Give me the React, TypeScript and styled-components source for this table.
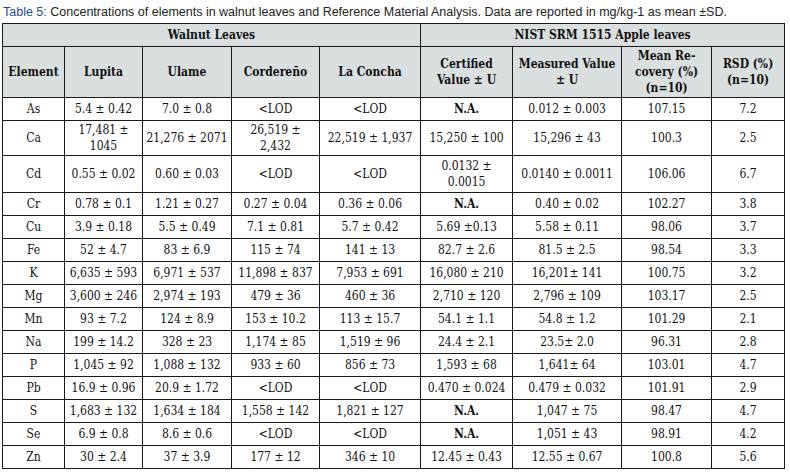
import React from 'react';
import styled, { createGlobalStyle } from 'styled-components';

const GlobalStyle = createGlobalStyle`
  body {
    margin: 0;
    background: #ffffff;
  }
`;

const Page = styled.div`
  width: 790px;
  padding: 0 0 0 2px;
  box-sizing: border-box;
`;

const Caption = styled.div`
  height: 23px;
  display: flex;
  align-items: center;
  padding-left: 1px;
  font-family: "Liberation Sans", Arial, sans-serif;
  font-size: 12.5px;
  color: #222222;
  white-space: nowrap;
`;

const Label = styled.span`
  color: #1f4a96;
`;

const Table = styled.table`
  border-collapse: collapse;
  table-layout: fixed;
  width: 783px;
  font-family: "DejaVu Serif Condensed", "DejaVu Serif", serif;
  font-size: 12px;
  color: #111111;
`;

const HeadCell = styled.th`
  background: #d9dfdf;
  border: 1px solid #1a1a1a;
  font-weight: bold;
  padding: 0 2px;
  line-height: 16px;
  text-align: center;
  vertical-align: middle;
  white-space: pre;
`;

const Cell = styled.td<{ $bold?: boolean }>`
  border: 1px solid #1a1a1a;
  padding: 0 2px;
  line-height: 16px;
  text-align: center;
  vertical-align: middle;
  white-space: pre;
  font-weight: ${(p) => (p.$bold ? 'bold' : 'normal')};
`;

const Row = styled.tr<{ $h: number }>`
  height: ${(p) => p.$h}px;
`;

const widths = [62, 78, 89, 88, 101, 92, 109, 90, 73];

const rows: { h: number; cells: string[] }[] = [
  { h: 23, cells: ['As', '5.4 ± 0.42', '7.0 ± 0.8', '<LOD', '<LOD', 'N.A.', '0.012 ± 0.003', '107.15', '7.2'] },
  { h: 35, cells: ['Ca', '17,481 ±\n1045', '21,276 ± 2071', '26,519 ±\n2,432', '22,519 ± 1,937', '15,250 ± 100', '15,296 ± 43', '100.3', '2.5'] },
  { h: 37, cells: ['Cd', '0.55 ± 0.02', '0.60 ± 0.03', '<LOD', '<LOD', '0.0132 ±\n0.0015', '0.0140 ± 0.0011', '106.06', '6.7'] },
  { h: 23, cells: ['Cr', '0.78 ± 0.1', '1.21 ± 0.27', '0.27 ± 0.04', '0.36 ± 0.06', 'N.A.', '0.40 ± 0.02', '102.27', '3.8'] },
  { h: 23, cells: ['Cu', '3.9 ± 0.18', '5.5 ± 0.49', '7.1 ± 0.81', '5.7 ± 0.42', '5.69 ±0.13', '5.58 ± 0.11', '98.06', '3.7'] },
  { h: 23, cells: ['Fe', '52 ± 4.7', '83 ± 6.9', '115 ± 74', '141 ± 13', '82.7 ± 2.6', '81.5 ± 2.5', '98.54', '3.3'] },
  { h: 23, cells: ['K', '6,635 ± 593', '6,971 ± 537', '11,898 ± 837', '7,953 ± 691', '16,080 ± 210', '16,201± 141', '100.75', '3.2'] },
  { h: 23, cells: ['Mg', '3,600 ± 246', '2,974 ± 193', '479 ± 36', '460 ± 36', '2,710 ± 120', '2,796 ± 109', '103.17', '2.5'] },
  { h: 23, cells: ['Mn', '93 ± 7.2', '124 ± 8.9', '153 ± 10.2', '113 ± 15.7', '54.1 ± 1.1', '54.8 ± 1.2', '101.29', '2.1'] },
  { h: 23, cells: ['Na', '199 ± 14.2', '328 ± 23', '1,174 ± 85', '1,519 ± 96', '24.4 ± 2.1', '23.5± 2.0', '96.31', '2.8'] },
  { h: 23, cells: ['P', '1,045 ± 92', '1,088 ± 132', '933 ± 60', '856 ± 73', '1,593 ± 68', '1,641± 64', '103.01', '4.7'] },
  { h: 23, cells: ['Pb', '16.9 ± 0.96', '20.9 ± 1.72', '<LOD', '<LOD', '0.470 ± 0.024', '0.479 ± 0.032', '101.91', '2.9'] },
  { h: 23, cells: ['S', '1,683 ± 132', '1,634 ± 184', '1,558 ± 142', '1,821 ± 127', 'N.A.', '1,047 ± 75', '98.47', '4.7'] },
  { h: 23, cells: ['Se', '6.9 ± 0.8', '8.6 ± 0.6', '<LOD', '<LOD', 'N.A.', '1,051 ± 43', '98.91', '4.2'] },
  { h: 23, cells: ['Zn', '30 ± 2.4', '37 ± 3.9', '177 ± 12', '346 ± 10', '12.45 ± 0.43', '12.55 ± 0.67', '100.8', '5.6'] },
];

const headers = [
  'Element',
  'Lupita',
  'Ulame',
  'Cordereño',
  'La Concha',
  'Certified\nValue ± U',
  'Measured Value\n± U',
  'Mean Re-\ncovery (%)\n(n=10)',
  'RSD (%)\n(n=10)',
];

export default function App() {
  return (
    <>
      <GlobalStyle />
      <Page>
        <Caption>
          <Label>Table 5:</Label>&nbsp;Concentrations of elements in walnut leaves and Reference Material Analysis. Data are reported in mg/kg-1 as mean ±SD.
        </Caption>
        <Table>
          <colgroup>
            {widths.map((w, i) => (
              <col key={i} style={{ width: w }} />
            ))}
          </colgroup>
          <thead>
            <Row $h={23}>
              <HeadCell colSpan={5}>Walnut Leaves</HeadCell>
              <HeadCell colSpan={4}>NIST SRM 1515 Apple leaves</HeadCell>
            </Row>
            <Row $h={51}>
              {headers.map((h) => (
                <HeadCell key={h}>{h}</HeadCell>
              ))}
            </Row>
          </thead>
          <tbody>
            {rows.map((r) => (
              <Row key={r.cells[0]} $h={r.h}>
                {r.cells.map((c, i) => (
                  <Cell key={i} $bold={c === 'N.A.'}>
                    {c}
                  </Cell>
                ))}
              </Row>
            ))}
          </tbody>
        </Table>
      </Page>
    </>
  );
}
